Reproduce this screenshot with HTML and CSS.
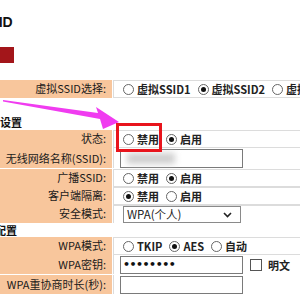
FILE: index.html
```html
<!DOCTYPE html>
<html lang="zh-CN">
<head>
<meta charset="utf-8">
<link rel="stylesheet" href="styles.css">
</head>
<body>
<div class="page">
  <div class="title">SSID</div>
  <div class="btn"></div>

  <div class="form">
    <div class="row">
      <div class="label">虚拟SSID选择:</div>
      <div class="value">
        <span class="opt"><span class="radio"></span>虚拟SSID1</span>
        <span class="opt"><span class="radio on"></span>虚拟SSID2</span>
        <span class="opt"><span class="radio"></span>虚拟SSID3</span>
      </div>
    </div>

    <div class="section s1">无线设置</div>

    <div class="row">
      <div class="label">状态:</div>
      <div class="value">
        <span class="opt"><span class="radio"></span>禁用</span>
        <span class="opt"><span class="radio on"></span>启用</span>
      </div>
    </div>
    <div class="row tall">
      <div class="label">无线网络名称(SSID):</div>
      <div class="value">
        <div class="input"><span class="blur"></span></div>
      </div>
    </div>
    <div class="row">
      <div class="label">广播SSID:</div>
      <div class="value">
        <span class="opt"><span class="radio"></span>禁用</span>
        <span class="opt"><span class="radio on"></span>启用</span>
      </div>
    </div>
    <div class="row">
      <div class="label">客户端隔离:</div>
      <div class="value">
        <span class="opt"><span class="radio on"></span>禁用</span>
        <span class="opt"><span class="radio"></span>启用</span>
      </div>
    </div>
    <div class="row">
      <div class="label">安全模式:</div>
      <div class="value">
        <div class="select">WPA(个人)<svg class="chev" width="9" height="6" viewBox="0 0 9 6"><path d="M1 1 L4.5 4.5 L8 1" fill="none" stroke="#222" stroke-width="1.6"/></svg></div>
      </div>
    </div>

    <div class="section s2">安全配置</div>

    <div class="row">
      <div class="label">WPA模式:</div>
      <div class="value">
        <span class="opt"><span class="radio"></span>TKIP</span>
        <span class="opt"><span class="radio on"></span>AES</span>
        <span class="opt"><span class="radio"></span>自动</span>
      </div>
    </div>
    <div class="row mid">
      <div class="label">WPA密钥:</div>
      <div class="value">
        <div class="input pw">••••••••</div>
        <span class="opt check-opt"><span class="check"></span>明文</span>
      </div>
    </div>
    <div class="row mid">
      <div class="label">WPA重协商时长(秒):</div>
      <div class="value">
        <div class="input"></div>
      </div>
    </div>
  </div>
</div>

<svg class="arrow" width="130" height="50" viewBox="0 0 130 50">
  <polygon points="3,12 98,25 96,19 119,34 103,41 100,31 3,13.5" fill="#f03cf0"/>
</svg>
<div class="highlight"></div>
</body>
</html>
```

FILE: styles.css
```css
html, body {
  margin: 0;
  padding: 0;
  background: #fff;
  overflow: hidden;
  width: 300px;
  height: 300px;
}

body {
  position: relative;
  font-family: "Noto Sans CJK SC", "Noto Sans", sans-serif;
  font-size: 11px;
  color: #222;
}

.page {
  margin-left: -40px;
  width: 400px;
}

.title {
  margin-top: 13px;
  padding-left: 20px;
  height: 18px;
  line-height: 18px;
  font-family: "Liberation Sans", sans-serif;
  font-weight: bold;
  font-size: 14px;
  color: #111;
}

.btn {
  margin-top: 16px;
  width: 54px;
  height: 16px;
  background: #a3161a;
}

.form {
  margin-top: 17px;
  display: flex;
  flex-direction: column;
  gap: 1px;
}

.row {
  display: grid;
  grid-template-columns: 152px 1fr;
  column-gap: 1px;
  height: 17px;
}

.row.tall {
  height: 20px;
}

.row.mid {
  height: 19px;
}

.label {
  background: #f8c69c;
  text-align: right;
  padding-right: 6px;
  line-height: 17px;
  white-space: nowrap;
  color: #1a1a1a;
}

.tall .label {
  line-height: 20px;
}

.mid .label {
  line-height: 19px;
}

.value {
  border: 1px solid #dcdcdc;
  border-right: none;
  display: flex;
  align-items: center;
  padding-left: 9px;
  white-space: nowrap;
  font-weight: bold;
}

.tall .value,
.mid .value {
  padding-left: 6px;
  border-top: none;
  border-bottom: none;
}

.opt {
  display: inline-flex;
  align-items: center;
  margin-right: 7px;
}

.radio {
  width: 9px;
  height: 9px;
  border: 1px solid #666;
  border-radius: 50%;
  margin-right: 3px;
  display: inline-flex;
  align-items: center;
  justify-content: center;
  background: #fff;
}

.radio.on::after {
  content: "";
  width: 5px;
  height: 5px;
  border-radius: 50%;
  background: #111;
}

.section {
  font-weight: bold;
  font-size: 11px;
  line-height: 14px;
  color: #111;
  background: #fff;
}

.section.s1 {
  padding-top: 17px;
  padding-left: 18px;
  height: 14px;
}

.section.s2 {
  padding-left: 13px;
  height: 13px;
}

.input {
  box-sizing: border-box;
  width: 123px;
  height: 19px;
  border: 1px solid #7a7a7a;
  background: #fff;
  position: relative;
}

.mid .input {
  height: 18px;
}

.blur {
  position: absolute;
  left: 6px;
  top: 3px;
  width: 48px;
  height: 11px;
  background: #cfcfcf;
  filter: blur(3px);
}

.input.pw {
  font-family: "DejaVu Sans", sans-serif;
  font-size: 11px;
  line-height: 16px;
  padding-left: 2px;
  letter-spacing: -0.5px;
  color: #111;
}

.check-opt {
  margin-left: 7px;
}

.check {
  width: 10px;
  height: 10px;
  border: 1px solid #555;
  margin-right: 6px;
  background: #fff;
}

.select {
  box-sizing: border-box;
  width: 118px;
  height: 17px;
  border: 1px solid #8a8a8a;
  font-weight: normal;
  padding-left: 3px;
  line-height: 15px;
  display: flex;
  align-items: center;
  justify-content: space-between;
  padding-right: 8px;
  font-size: 11.5px;
}

.chev {
  display: block;
}

.arrow {
  position: absolute;
  left: 0;
  top: 88px;
}

.highlight {
  position: absolute;
  left: 116px;
  top: 123px;
  width: 40px;
  height: 23px;
  border: 3px solid #e8141c;
}
```
